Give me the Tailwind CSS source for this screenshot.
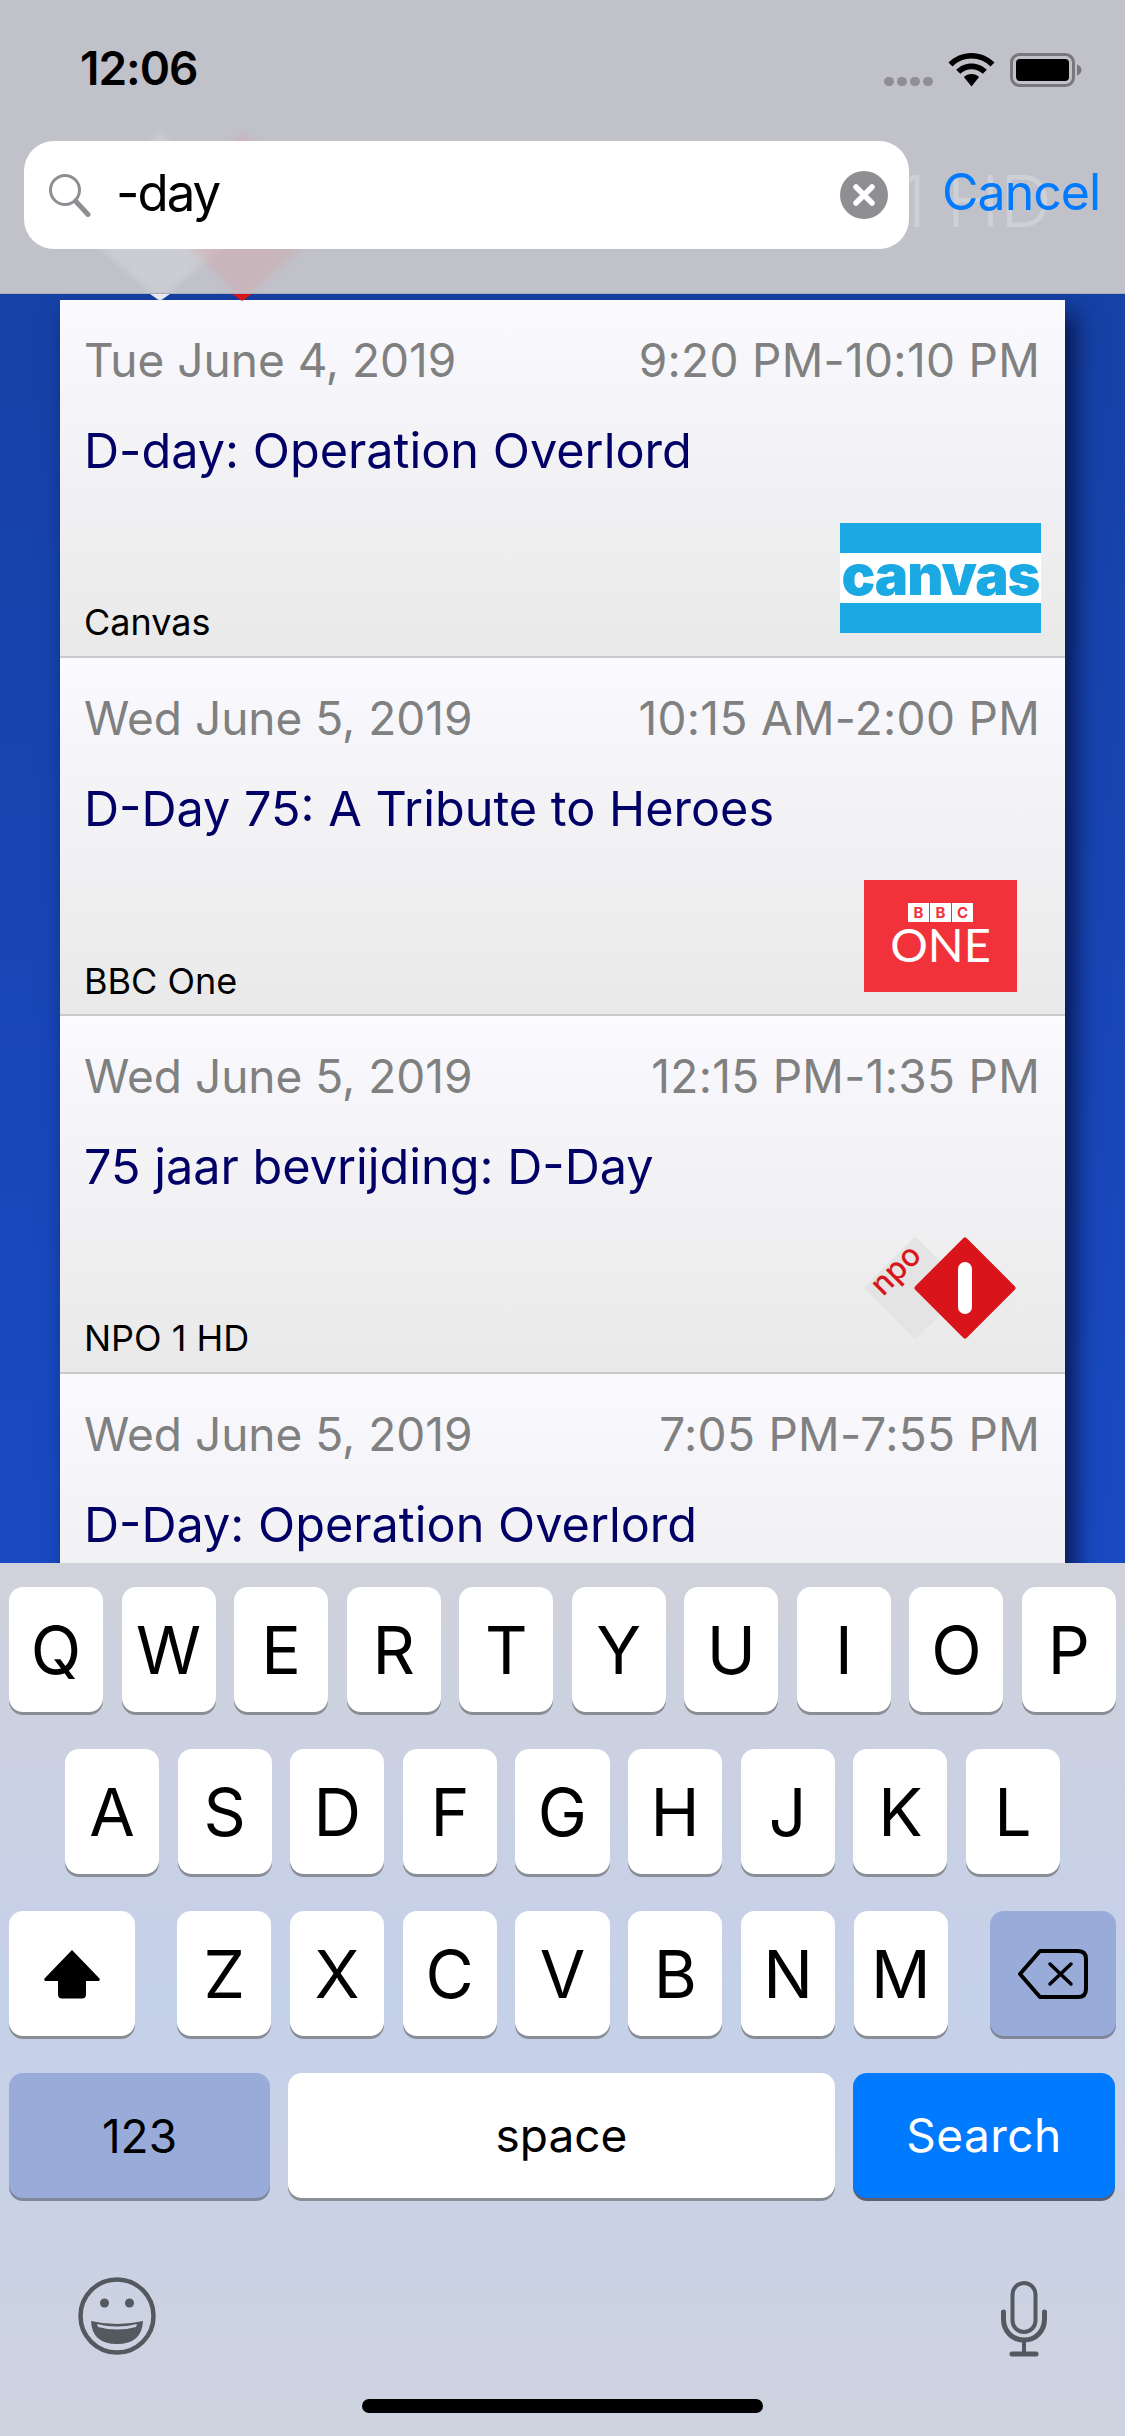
<!DOCTYPE html>
<html lang="en">

<head>
    <meta charset="UTF-8">
    <meta name="viewport" content="width=device-width, initial-scale=1.0">
    <title>Search</title>
    <script src="https://cdn.jsdelivr.net/npm/@tailwindcss/browser@4"></script>
</head>

<body class="m-0">
    <div class="relative flex flex-col w-[1125px] h-[2436px] overflow-hidden font-['Inter','Liberation_Sans',sans-serif] bg-gradient-to-b from-[#153f9f] to-[#1c50d8]">

        <!-- nav + search -->
        <header class="relative h-[294px] shrink-0 bg-[#c1c1ca] border-b border-[#a9adb8] overflow-hidden">
            <!-- blurred logo behind the bar -->
            <svg class="absolute left-[50px] top-[125px] blur-[3px]" width="300" height="170" viewBox="0 0 300 170">
                <path d="M110 7L205 92L110 176L15 92Z" fill="#dcdce2" opacity=".4" />
                <path d="M192 7L287 92L192 176L112 92Z" fill="#d8a0a4" opacity=".35" />
            </svg>
            <span class="absolute left-[898px] top-[158px] text-[72px] leading-[86px] font-light text-[#cfcfd6]">1 HD</span>

            <div class="relative flex items-center justify-between h-[141px] pl-[80px] pr-[43px] pb-[4px]">
                <span class="text-[46px] font-semibold tracking-[-1px] text-black">12:06</span>
                <div class="flex items-end h-[36px]">
                    <div class="flex gap-[3px] mb-[1px] mr-[15px]">
                        <i class="w-[10px] h-[9px] rounded-full bg-[#8e8e93]"></i>
                        <i class="w-[10px] h-[9px] rounded-full bg-[#8e8e93]"></i>
                        <i class="w-[10px] h-[9px] rounded-full bg-[#8e8e93]"></i>
                        <i class="w-[10px] h-[9px] rounded-full bg-[#8e8e93]"></i>
                    </div>
                    <svg class="mr-[15px]" width="47" height="34" viewBox="0 0 47 34">
                        <path d="M23.5 0C14.5 0 6.5 3.6 0.5 9.5L4.5 13.5C9.5 8.6 16.2 5.6 23.5 5.6S37.500 8.600 42.500 13.500L46.500 9.500C40.500 3.600 32.500 0 23.500 0Z" />
                        <path d="M23.500 10.500C17.500 10.500 12.200 12.900 8.200 16.800L12.200 20.800C15.100 18 19.100 16.200 23.500 16.200S31.900 18 34.800 20.800L38.800 16.800C34.800 12.900 29.500 10.500 23.500 10.500Z" />
                        <path d="M23.500 21C20.500 21 17.900 22.200 15.900 24.100L23.500 33.500L31.100 24.100C29.100 22.200 26.500 21 23.500 21Z" />
                    </svg>
                    <svg width="72" height="34" viewBox="0 0 72 34">
                        <rect x="1.500" y="1.500" width="62" height="31" rx="8" fill="none" stroke="#77777c" stroke-width="3" />
                        <rect x="6" y="6" width="53" height="22" rx="4" />
                        <path d="M67 11.500C70 12.500 71.500 14.500 71.500 17S70 21.500 67 22.500Z" fill="#77777c" />
                    </svg>
                </div>
            </div>

            <div class="relative flex items-center pl-[24px] pr-[25px]">
                <div class="flex items-center w-[885px] h-[108px] rounded-[30px] bg-white pl-[24px] pr-[21px]">
                    <svg class="shrink-0" width="44" height="44" viewBox="0 0 44 44" fill="none" stroke="#8e8e93">
                        <circle cx="17" cy="17" r="14.500" stroke-width="3" />
                        <path d="M27.500 28L40 41.500" stroke-width="5" stroke-linecap="round" />
                    </svg>
                    <span class="ml-[24px] mb-[6px] text-[51px] leading-none tracking-[-2px] text-black">-day</span>
                    <svg class="ml-auto" width="48" height="48" viewBox="0 0 48 48">
                        <circle cx="24" cy="24" r="24" fill="#8e8e93" />
                        <path d="M16 16L32 32M32 16L16 32" stroke="#fff" stroke-width="5.500" stroke-linecap="round" />
                    </svg>
                </div>
                <span class="ml-auto mb-[6px] text-[50px] leading-none tracking-[-1px] text-[#007aff]">Cancel</span>
            </div>
        </header>

        <!-- tips of the logo that stick out under the bar -->
        <svg class="absolute left-[145px] top-[294px]" width="110" height="7" viewBox="0 0 110 7">
            <path d="M5 0H25L15 7Z" fill="#e8e8f0" />
            <path d="M87 0H107L97 7Z" fill="#d9151b" />
        </svg>

        <!-- results -->
        <main class="flex-1 min-h-0 pt-[6px] overflow-hidden">
            <div class="ml-[60px] w-[1005px] shadow-[10px_14px_22px_0_rgba(5,15,60,0.85)]">

                <article class="flex flex-col h-[358px] pl-[24px] pr-[25px] border-b-2 border-[#c9c9c9] bg-gradient-to-b from-[#fafaff] to-[#e9e9e9]">
                    <div class="flex justify-between mt-[32px] text-[46px] leading-[56px] text-[#808080]">
                        <span>Tue June 4, 2019</span>
                        <span class="tracking-[0.300px]">9:20 PM-10:10 PM</span>
                    </div>
                    <h2 class="mt-[34px] text-[48.600px] leading-[58px] font-normal text-[#000066]">D-day: Operation Overlord</h2>
                    <div class="flex justify-between items-end mt-auto pb-[23px]">
                        <span class="text-[36px] leading-[42px] text-black mb-[-10px]">Canvas</span>
                        <div class="flex flex-col justify-center items-center w-[201px] h-[110px] mr-[-1px] border-y-[30px] border-[#1aa9e3] bg-white">
                            <span class="text-[56px] leading-none font-black tracking-[-1px] text-[#1aa9e3] mb-[6px]">canvas</span>
                        </div>
                    </div>
                </article>

                <article class="flex flex-col h-[358px] pl-[24px] pr-[25px] border-b-2 border-[#c9c9c9] bg-gradient-to-b from-[#fafaff] to-[#e9e9e9]">
                    <div class="flex justify-between mt-[32px] text-[46px] leading-[56px] text-[#808080]">
                        <span>Wed June 5, 2019</span>
                        <span class="tracking-[0.300px]">10:15 AM-2:00 PM</span>
                    </div>
                    <h2 class="mt-[34px] text-[48.600px] leading-[58px] font-normal text-[#000066]">D-Day 75: A Tribute to Heroes</h2>
                    <div class="flex justify-between items-end mt-auto pb-[22px]">
                        <span class="text-[36px] leading-[42px] text-black mb-[-10px]">BBC One</span>
                        <div class="flex flex-col items-center w-[153px] h-[112px] mr-[23px] pt-[23px] bg-[#f1323a]">
                            <div class="flex gap-[1px]">
                                <span class="w-[21px] h-[19px] bg-white text-[15px] leading-[19px] font-bold text-center text-[#f1323a]">B</span>
                                <span class="w-[21px] h-[19px] bg-white text-[15px] leading-[19px] font-bold text-center text-[#f1323a]">B</span>
                                <span class="w-[21px] h-[19px] bg-white text-[15px] leading-[19px] font-bold text-center text-[#f1323a]">C</span>
                            </div>
                            <span class="mt-[3px] text-[47px] leading-[38px] font-['Lato',sans-serif] text-white">ONE</span>
                        </div>
                    </div>
                </article>

                <article class="flex flex-col h-[358px] pl-[24px] pr-[25px] border-b-2 border-[#c9c9c9] bg-gradient-to-b from-[#fafaff] to-[#e9e9e9]">
                    <div class="flex justify-between mt-[32px] text-[46px] leading-[56px] text-[#808080]">
                        <span>Wed June 5, 2019</span>
                        <span class="tracking-[0.300px]">12:15 PM-1:35 PM</span>
                    </div>
                    <h2 class="mt-[34px] text-[48.600px] leading-[58px] font-normal text-[#000066]">75 jaar bevrijding: D-Day</h2>
                    <div class="flex justify-between items-end mt-auto pb-[33px]">
                        <span class="text-[36px] leading-[42px] text-black mb-[-20px]">NPO 1 HD</span>
                        <svg class="mr-[24px] overflow-visible" width="152" height="102" viewBox="0 0 152 102">
                            <path d="M51 3L100 51L51 99L3 51Z" fill="#e4e4e4" stroke="#e4e4e4" stroke-width="5" stroke-linejoin="round" />
                            <path d="M101 3L149 51L101 99L53 51Z" fill="#d9151b" stroke="#d9151b" stroke-width="5" stroke-linejoin="round" />
                            <rect x="94" y="25" width="14" height="52" rx="7" fill="#fff" />
                            <text x="0" y="0" transform="translate(19 60) rotate(-45)" font-family="Inter, sans-serif" font-size="31" font-weight="500" fill="#d9151b">npo</text>
                        </svg>
                    </div>
                </article>

                <article class="flex flex-col h-[358px] pl-[24px] pr-[25px] bg-gradient-to-b from-[#fafaff] to-[#e9e9e9]">
                    <div class="flex justify-between mt-[32px] text-[46px] leading-[56px] text-[#808080]">
                        <span>Wed June 5, 2019</span>
                        <span class="tracking-[0.300px]">7:05 PM-7:55 PM</span>
                    </div>
                    <h2 class="mt-[34px] text-[48.600px] leading-[58px] font-normal text-[#000066]">D-Day: Operation Overlord</h2>
                </article>
            </div>
        </main>

        <!-- keyboard -->
        <section class="relative h-[873px] shrink-0 pt-[24px] bg-gradient-to-b from-[#d0d2db] via-[#c5d0ea] to-[#ced3df]">
            <div class="flex gap-[18.500px] h-[125px] px-[9px] mb-[37px] text-[66px] text-black">
                <div class="flex-1 flex items-center justify-center pt-[2px] rounded-[14px] bg-white shadow-[0_3px_0_#898d96]">Q</div>
                <div class="flex-1 flex items-center justify-center pt-[2px] rounded-[14px] bg-white shadow-[0_3px_0_#898d96]">W</div>
                <div class="flex-1 flex items-center justify-center pt-[2px] rounded-[14px] bg-white shadow-[0_3px_0_#898d96]">E</div>
                <div class="flex-1 flex items-center justify-center pt-[2px] rounded-[14px] bg-white shadow-[0_3px_0_#898d96]">R</div>
                <div class="flex-1 flex items-center justify-center pt-[2px] rounded-[14px] bg-white shadow-[0_3px_0_#898d96]">T</div>
                <div class="flex-1 flex items-center justify-center pt-[2px] rounded-[14px] bg-white shadow-[0_3px_0_#898d96]">Y</div>
                <div class="flex-1 flex items-center justify-center pt-[2px] rounded-[14px] bg-white shadow-[0_3px_0_#898d96]">U</div>
                <div class="flex-1 flex items-center justify-center pt-[2px] rounded-[14px] bg-white shadow-[0_3px_0_#898d96]">I</div>
                <div class="flex-1 flex items-center justify-center pt-[2px] rounded-[14px] bg-white shadow-[0_3px_0_#898d96]">O</div>
                <div class="flex-1 flex items-center justify-center pt-[2px] rounded-[14px] bg-white shadow-[0_3px_0_#898d96]">P</div>
            </div>
            <div class="flex gap-[18.500px] h-[125px] px-[65px] mb-[37px] text-[66px] text-black">
                <div class="flex-1 flex items-center justify-center pt-[2px] rounded-[14px] bg-white shadow-[0_3px_0_#898d96]">A</div>
                <div class="flex-1 flex items-center justify-center pt-[2px] rounded-[14px] bg-white shadow-[0_3px_0_#898d96]">S</div>
                <div class="flex-1 flex items-center justify-center pt-[2px] rounded-[14px] bg-white shadow-[0_3px_0_#898d96]">D</div>
                <div class="flex-1 flex items-center justify-center pt-[2px] rounded-[14px] bg-white shadow-[0_3px_0_#898d96]">F</div>
                <div class="flex-1 flex items-center justify-center pt-[2px] rounded-[14px] bg-white shadow-[0_3px_0_#898d96]">G</div>
                <div class="flex-1 flex items-center justify-center pt-[2px] rounded-[14px] bg-white shadow-[0_3px_0_#898d96]">H</div>
                <div class="flex-1 flex items-center justify-center pt-[2px] rounded-[14px] bg-white shadow-[0_3px_0_#898d96]">J</div>
                <div class="flex-1 flex items-center justify-center pt-[2px] rounded-[14px] bg-white shadow-[0_3px_0_#898d96]">K</div>
                <div class="flex-1 flex items-center justify-center pt-[2px] rounded-[14px] bg-white shadow-[0_3px_0_#898d96]">L</div>
            </div>
            <div class="flex h-[125px] px-[9px] mb-[37px] text-[66px] text-black">
                <div class="w-[126px] mr-[42px] flex items-center justify-center rounded-[14px] bg-white shadow-[0_3px_0_#898d96]">
                    <svg width="58" height="50" viewBox="0 0 58 50">
                        <path d="M29 1L56.500 29.500Q57.500 32 55 32H43V45Q43 49.500 39 49.500H19Q15 49.500 15 45V32H3Q0.500 32 1.500 29.500Z" />
                    </svg>
                </div>
                <div class="flex flex-1 gap-[18.500px]">
                    <div class="flex-1 flex items-center justify-center pt-[2px] rounded-[14px] bg-white shadow-[0_3px_0_#898d96]">Z</div>
                    <div class="flex-1 flex items-center justify-center pt-[2px] rounded-[14px] bg-white shadow-[0_3px_0_#898d96]">X</div>
                    <div class="flex-1 flex items-center justify-center pt-[2px] rounded-[14px] bg-white shadow-[0_3px_0_#898d96]">C</div>
                    <div class="flex-1 flex items-center justify-center pt-[2px] rounded-[14px] bg-white shadow-[0_3px_0_#898d96]">V</div>
                    <div class="flex-1 flex items-center justify-center pt-[2px] rounded-[14px] bg-white shadow-[0_3px_0_#898d96]">B</div>
                    <div class="flex-1 flex items-center justify-center pt-[2px] rounded-[14px] bg-white shadow-[0_3px_0_#898d96]">N</div>
                    <div class="flex-1 flex items-center justify-center pt-[2px] rounded-[14px] bg-white shadow-[0_3px_0_#898d96]">M</div>
                </div>
                <div class="w-[126px] ml-[42px] flex items-center justify-center rounded-[14px] bg-[#98abd9] shadow-[0_3px_0_#7f8698]">
                    <svg width="70" height="50" viewBox="0 0 70 50" fill="none" stroke="#000" stroke-linecap="round" stroke-linejoin="round">
                        <path d="M22 2H60Q68 2 68 10V40Q68 48 60 48H22L2 25Z" stroke-width="4" />
                        <path d="M32 15L53 35M53 15L32 35" stroke-width="3.500" />
                    </svg>
                </div>
            </div>
            <div class="flex gap-[18px] h-[125px] px-[9px]">
                <div class="w-[261px] flex items-center justify-center pt-[2px] rounded-[14px] bg-[#98abd9] text-[46px] text-black shadow-[0_3px_0_#7f8698]">123</div>
                <div class="w-[547px] flex items-center justify-center rounded-[14px] bg-white text-[46px] text-black shadow-[0_3px_0_#898d96]">space</div>
                <div class="w-[262px] flex items-center justify-center rounded-[14px] bg-[#007aff] text-[46px] tracking-[0.500px] text-white shadow-[0_3px_0_#5b6070]">Search</div>
            </div>

            <div class="flex justify-between items-start pl-[78px] pr-[78px] mt-[79px]">
                <svg width="78" height="78" viewBox="0 0 78 78">
                    <circle cx="39" cy="39" r="36.500" fill="none" stroke="#54585f" stroke-width="4.500" />
                    <circle cx="26.500" cy="26" r="4.500" fill="#54585f" />
                    <circle cx="51.500" cy="26" r="4.500" fill="#54585f" />
                    <path d="M13 44Q39 50 65 44Q64 67 39 67Q14 67 13 44Z" fill="#54585f" />
                    <path d="M19 47Q39 52 59 47L58 50Q39 55 20 50Z" fill="#c9d0e0" />
                </svg>
                <svg class="mt-[4px]" width="46" height="76" viewBox="0 0 46 76" fill="none" stroke="#54585f" stroke-linecap="round">
                    <rect x="11.500" y="2" width="23" height="49" rx="11.500" stroke-width="4" />
                    <path d="M2.500 31V38C2.500 50 11 59 23 59S43.500 50 43.500 38V31" stroke-width="5" />
                    <path d="M23 59V72" stroke-width="4" />
                    <path d="M11 73H35" stroke-width="5" />
                </svg>
            </div>

            <div class="absolute left-[362px] bottom-[23px] w-[401px] h-[14px] rounded-full bg-black"></div>
        </section>
    </div>
</body>

</html>
